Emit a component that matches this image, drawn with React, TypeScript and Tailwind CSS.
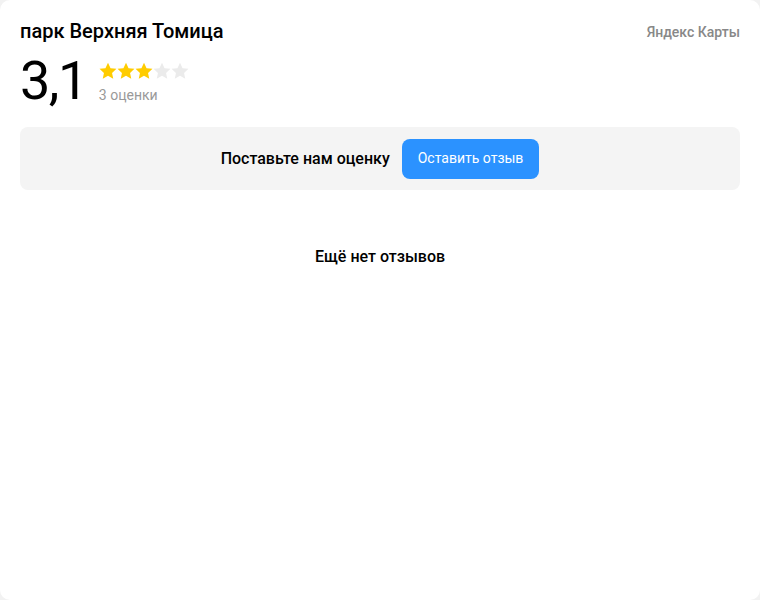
import React from "react";

const Star = ({ color }: { color: string }) => (
  <svg width="18" height="18" viewBox="0 0 24 23" className="shrink-0">
    <path
      fill={color}
      d="M12 0.5l3.4 7.2 7.9.9-5.9 5.4 1.6 7.8L12 17.9l-7 3.9 1.6-7.8L.7 8.6l7.9-.9z"
    />
  </svg>
);

export default function App() {
  return (
    <div className="w-[760px] h-[600px] bg-[#f2f2f2]" style={{ fontFamily: "Roboto, 'Noto Sans', sans-serif" }}>
      <div className="w-full h-full bg-white rounded-[10px] px-5 pt-[18px] flex flex-col">
        <div className="flex items-start justify-between">
          <h1 className="text-[20px] leading-[26px] font-medium text-black">парк Верхняя Томица</h1>
          <span className="text-[14px] leading-[26px] font-medium text-[#888888] mt-[1px]">Яндекс Карты</span>
        </div>
        <div className="flex items-start mt-[6px] gap-[12px]">
          <span className="text-[54px] leading-[60px] tracking-[-1.5px] text-black">3,1</span>
          <div className="flex flex-col pt-[11px]">
            <div className="flex">
              <Star color="#fc0" />
              <Star color="#fc0" />
              <Star color="#fc0" />
              <Star color="#ebebeb" />
              <Star color="#ebebeb" />
            </div>
            <span className="text-[14px] leading-[18px] text-[#999999] mt-[6px]">3 оценки</span>
          </div>
        </div>
        <div className="mt-[16px] h-[63px] bg-[#f4f4f4] rounded-[8px] flex items-center justify-center gap-[12px]">
          <span className="text-[16px] font-medium text-black">Поставьте нам оценку</span>
          <button className="h-[40px] px-4 rounded-[8px] bg-[#2b92ff] text-white text-[14px]">Оставить отзыв</button>
        </div>
        <div className="mt-[55px] text-center text-[16px] font-medium text-black">Ещё нет отзывов</div>
      </div>
    </div>
  );
}
